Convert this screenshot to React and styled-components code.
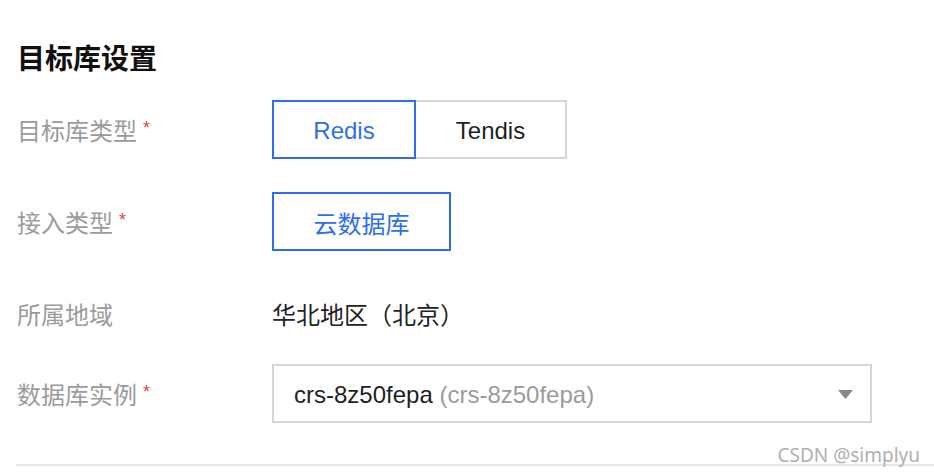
import React from "react";
import styled, { createGlobalStyle } from "styled-components";

const GlobalStyle = createGlobalStyle`
  html, body {
    margin: 0;
    padding: 0;
    background: #fff;
  }
  body {
    font-family: "Liberation Sans", "Noto Sans CJK SC", sans-serif;
    -webkit-font-smoothing: antialiased;
  }
`;

const Page = styled.div`
  position: relative;
  width: 934px;
  height: 476px;
  overflow: hidden;
  padding: 42px 0 0 17px;
  box-sizing: border-box;
`;

const Title = styled.h2`
  margin: 0 0 22px;
  font-size: 28px;
  line-height: 36px;
  font-weight: 700;
  color: #111;
`;

const Row = styled.div`
  display: grid;
  grid-template-columns: 255px 1fr;
  align-items: center;
  height: 59px;
  margin-bottom: ${(p) => p.$gap ?? 33}px;
`;

const Label = styled.div`
  font-size: 24px;
  color: #9b9b9b;
  display: flex;
  align-items: center;
`;

const Required = styled.span`
  color: #e0464b;
  font-size: 18px;
  margin-left: 6px;
  position: relative;
  top: -1px;
`;

const Segmented = styled.div`
  display: flex;
`;

const Option = styled.button`
  height: 59px;
  width: ${(p) => p.$width}px;
  box-sizing: border-box;
  margin: 0 0 0 -2px;
  padding: 2px 0 0;
  background: #fff;
  border: 2px solid ${(p) => (p.$active ? "#2d6df0" : "#d2d5dd")};
  color: ${(p) => (p.$active ? "#2d6df0" : "#1f1f1f")};
  font-family: inherit;
  font-size: 24px;
  position: relative;
  z-index: ${(p) => (p.$active ? 1 : 0)};
  cursor: pointer;

  &:first-child {
    margin-left: 0;
  }
`;

const Value = styled.div`
  font-size: 24px;
  color: #222;
`;

const Select = styled.div`
  width: 600px;
  height: 59px;
  box-sizing: border-box;
  border: 2px solid #d2d5dd;
  display: flex;
  align-items: center;
  padding: 2px 17px 0 20px;
  font-size: 24px;
  color: #1f1f1f;
`;

const SelectText = styled.span`
  flex: 1;
  white-space: nowrap;
`;

const Muted = styled.span`
  color: #9b9b9b;
`;

const Caret = styled.svg`
  width: 15px;
  height: 9px;
  flex: none;
`;

const Divider = styled.div`
  height: 2px;
  background: #e6e7ec;
  margin: 41px 0 0 -1px;
`;

const Watermark = styled.div`
  position: absolute;
  right: 14px;
  bottom: 8px;
  font-family: "Noto Sans", "Open Sans", sans-serif;
  font-size: 19px;
  color: #b0b0b0;
`;

export default function App() {
  return (
    <>
      <GlobalStyle />
      <Page>
        <Title>目标库设置</Title>

        <Row>
          <Label>
            目标库类型<Required>*</Required>
          </Label>
          <Segmented>
            <Option $active $width={144}>Redis</Option>
            <Option $width={153}>Tendis</Option>
          </Segmented>
        </Row>

        <Row>
          <Label>
            接入类型<Required>*</Required>
          </Label>
          <Segmented>
            <Option $active $width={179}>云数据库</Option>
          </Segmented>
        </Row>

        <Row $gap={21}>
          <Label>所属地域</Label>
          <Value>华北地区（北京）</Value>
        </Row>

        <Row $gap={0}>
          <Label>
            数据库实例<Required>*</Required>
          </Label>
          <Select>
            <SelectText>
              crs-8z50fepa <Muted>(crs-8z50fepa)</Muted>
            </SelectText>
            <Caret viewBox="0 0 15 9">
              <path d="M0 0h15L7.5 9z" fill="#888" />
            </Caret>
          </Select>
        </Row>

        <Divider />
        <Watermark>CSDN @simplyu</Watermark>
      </Page>
    </>
  );
}
